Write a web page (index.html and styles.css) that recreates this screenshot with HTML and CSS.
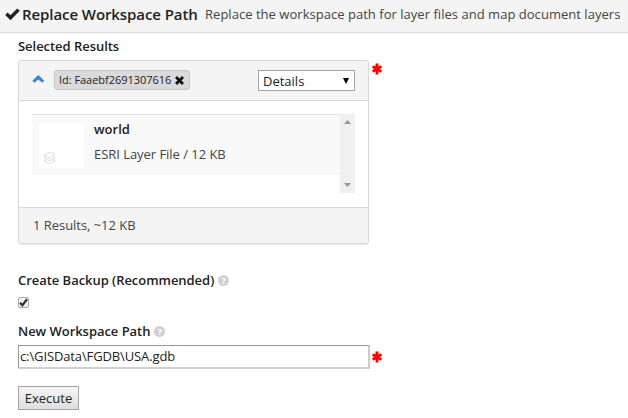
FILE: index.html
```html
<!DOCTYPE html>
<html lang="en">
<head>
<meta charset="utf-8">
<title>Replace Workspace Path</title>
<link rel="stylesheet" href="styles.css">
</head>
<body>
<header class="task-header">
  <svg class="check" width="15" height="13" viewBox="0 0 15 13"><path d="M0.2 7 2.6 4.6 5.4 7.2 12.2 0.4 14.8 2.8 5.5 12.2Z" fill="#222"/></svg>
  <h1 class="title">Replace Workspace Path</h1>
  <span class="summary">Replace the workspace path for layer files and map document layers</span>
</header>
<main class="form">
  <div class="label results-label">Selected Results</div>
  <div class="field">
    <section class="panel">
      <div class="panel-head">
        <svg class="chevron" width="13" height="8" viewBox="0 0 13 8"><path d="M0.3 5.8 6.3 0 12.3 5.8 10.2 7.8 6.3 4.6 2.4 7.8Z" fill="#3a87cc"/></svg>
        <span class="chip"><span class="chip-text">Id: Faaebf2691307616</span><svg width="9" height="9" viewBox="0 0 9 9"><path d="M2 0 4.5 2.5 7 0 9 2 6.5 4.5 9 7 7 9 4.5 6.5 2 9 0 7 2.5 4.5 0 2Z" fill="#111"/></svg></span>
        <div class="select"><span class="select-text">Details</span><svg width="6" height="6" viewBox="0 0 6 6"><path d="M0 0H6L3 6Z" fill="#000"/></svg></div>
      </div>
      <div class="panel-body">
        <div class="list">
          <article class="item">
            <div class="thumb"><svg width="13" height="14" viewBox="0 0 13 14" fill="none" stroke="#dcdcdc"><path d="M6.5 1 12 4 6.5 7 1 4ZM3 5.6 1 6.9 6.5 9.9 12 6.9 10 5.6M3 8.6 1 9.9 6.5 12.9 12 9.9 10 8.6"/></svg></div>
            <div class="item-info">
              <div class="item-name">world</div>
              <div class="item-type">ESRI Layer File / 12 KB</div>
            </div>
          </article>
        </div>
        <div class="scrollbar">
          <svg width="7" height="4" viewBox="0 0 7 4"><path d="M0 4 3.5 0 7 4Z" fill="#999"/></svg>
          <svg width="7" height="4" viewBox="0 0 7 4"><path d="M0 0H7L3.5 4Z" fill="#999"/></svg>
        </div>
      </div>
      <footer class="panel-foot"><span class="count">1 Results, ~12 KB</span></footer>
    </section>
    <svg class="required top" width="10" height="12" viewBox="0 0 10 12"><path d="M5 0.5V11.5M0.6 3.4 9.4 8.6M9.4 3.4 0.6 8.6" stroke="#f00" stroke-width="2.9"/></svg>
  </div>
  <div class="label backup-label"><span class="backup-text">Create Backup (Recommended)</span><span class="help">?</span></div>
  <div class="checkbox"><svg width="9" height="9" viewBox="0 0 9 9"><path d="M1 4.7 3.4 7.2 8 1.3" fill="none" stroke="#333" stroke-width="2.2"/></svg></div>
  <div class="label path-label"><span class="path-text">New Workspace Path</span><span class="help">?</span></div>
  <div class="field path-field">
    <div class="input"><span class="input-text">c:\GISData\FGDB\USA.gdb</span></div>
    <svg class="required" width="10" height="12" viewBox="0 0 10 12"><path d="M5 0.5V11.5M0.6 3.4 9.4 8.6M9.4 3.4 0.6 8.6" stroke="#f00" stroke-width="2.9"/></svg>
  </div>
  <button class="execute">Execute</button>
</main>
</body>
</html>
```
FILE: styles.css
```css
* { box-sizing: border-box; }
body {
  margin: 0;
  width: 628px;
  height: 418px;
  overflow: hidden;
  background: #fff;
  color: #444;
  font: 13px/18px "Open Sans", sans-serif;
  white-space: nowrap;
}
svg { display: block; flex: none; }
.task-header {
  display: flex;
  height: 33px;
  padding: 0 0 4px 5px;
  align-items: center;
  background: #f4f4f4;
  border-bottom: 1px solid #e0e0e0;
  box-shadow: 0 1px 0 #f3f3f3;
}
.title {
  width: 182px;
  margin: 0 0 0 2px;
  color: #222;
  font-size: 15px;
  font-weight: 600;
  line-height: 20px;
  letter-spacing: -0.08px;
}
.summary { margin-left: 1px; letter-spacing: 0.03px; }
.form { padding: 4px 0 0 18px; }
.label { display: flex; align-items: center; height: 18px; color: #222; font-weight: 600; letter-spacing: -0.04px; }
.field { display: flex; align-items: center; gap: 2px; }
.panel {
  width: 351px;
  height: 184px;
  margin-top: 5px;
  border: 1px solid #d8d8d8;
  border-radius: 3px;
  box-shadow: 0 1px 1px #e8e8e8;
  overflow: hidden;
}
.panel-head {
  display: flex;
  align-items: center;
  height: 40px;
  padding: 0 13px;
  background: #f4f4f4;
  border-bottom: 1px solid #d8d8d8;
}
.chevron { margin-bottom: 3px; }
.chip {
  display: flex;
  align-items: center;
  gap: 4px;
  width: 136px;
  height: 20px;
  margin: -1px 0 0 9px;
  padding-left: 4px;
  border: 1px solid #c8c8c8;
  border-radius: 3px;
  background: #dadada;
  color: #222;
  font-size: 11px;
}
.chip-text { letter-spacing: -0.04px; }
.select {
  display: flex;
  align-items: center;
  justify-content: space-between;
  width: 97px;
  height: 21px;
  margin-left: auto;
  padding: 0 5px 0 4px;
  border: 1px solid #a5a5a5;
  background: #fff;
  color: #222;
}
.panel-body { display: flex; height: 106px; padding: 13px; }
.list { flex: 1; }
.item { display: flex; height: 61px; padding: 8px 7px; background: #f9f9f9; border-top: 1px solid #e4e4e4; }
.thumb { display: flex; align-items: flex-end; width: 45px; height: 45px; padding: 0 0 3px 4px; background: #fff; }
.item-info { margin: -3px 0 0 10px; }
.item-name { color: #222; font-weight: 600; }
.item-type { margin-top: 7px; }
.scrollbar {
  display: flex;
  flex-direction: column;
  align-items: center;
  justify-content: space-between;
  width: 15px;
  height: 79px;
  padding: 6px 0;
  background: #f0f0f0;
}
.panel-foot { height: 37px; padding: 8px 14px; background: #f4f4f4; border-top: 1px solid #d8d8d8; }
.count, .item-type { letter-spacing: -0.04px; }
.required.top { align-self: flex-start; margin: 8px 0 0 1px; }
.backup-label { margin-top: 27px; }
.help {
  width: 11px;
  height: 11px;
  margin-left: 4px;
  border-radius: 50%;
  background: #d0d0d0;
  color: #fff;
  font-size: 9px;
  font-weight: 700;
  line-height: 11px;
  text-align: center;
}
.checkbox {
  display: flex;
  width: 11px;
  height: 11px;
  margin-top: 8px;
  border: 1px solid #aaa;
  border-radius: 2px;
  background: #f0f0f0;
}
.path-label { margin-top: 14px; }
.path-field { margin-top: 5px; }
.input {
  width: 352px;
  height: 24px;
  padding: 1px 1px;
  border: 1px solid #999;
  border-right: 2px solid #ccc;
  border-bottom: 2px solid #d0d0d0;
  color: #222;
}
.input-text { letter-spacing: -0.12px; }
.execute {
  display: block;
  width: 61px;
  height: 24px;
  margin-top: 17px;
  padding: 0;
  border: 1px solid #a3a3a3;
  background: linear-gradient(#f5f5f5, #dedede);
  color: #222;
  font: inherit;
}
```
